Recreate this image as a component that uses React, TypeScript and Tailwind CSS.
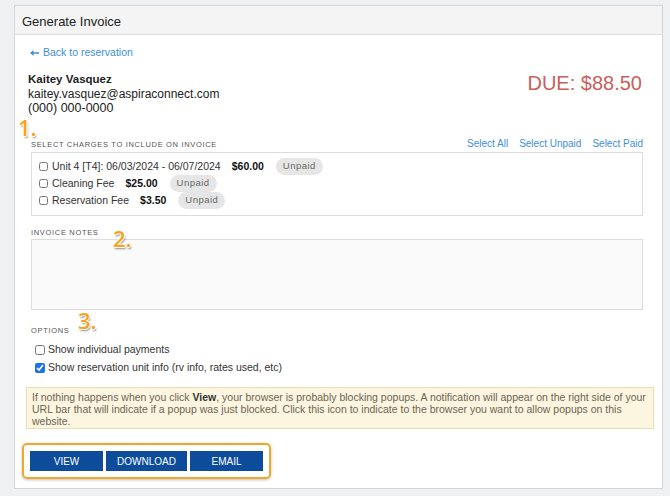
import { useState } from "react";

type Charge = {
  id: string;
  label: string;
  amount: string;
};

const charges: Charge[] = [
  { id: "unit", label: "Unit 4 [T4]: 06/03/2024 - 06/07/2024", amount: "$60.00" },
  { id: "cleaning", label: "Cleaning Fee", amount: "$25.00" },
  { id: "reservation", label: "Reservation Fee", amount: "$3.50" },
];

const Marker = ({ n, className }: { n: string; className: string }) => (
  <span
    className={`absolute font-['Open_Sans',sans-serif] text-[22px] font-semibold leading-none text-[#f3a51f] ${className}`}
    style={{
      textShadow:
        "1px 0 0 #fff, -1px 0 0 #fff, 0 1px 0 #fff, 0 -1px 0 #fff, 1px 2px 2px rgba(0,0,0,0.45)",
    }}
  >
    {n}
  </span>
);

const App = () => {
  const [selected, setSelected] = useState<string[]>([]);
  const [showPayments, setShowPayments] = useState(false);
  const [showUnitInfo, setShowUnitInfo] = useState(true);

  const toggle = (id: string) =>
    setSelected((s) => (s.includes(id) ? s.filter((x) => x !== id) : [...s, id]));

  return (
    <div className="min-h-[496px] w-[670px] bg-[#eef0f2] pt-[5px] pl-[14px] font-['Liberation_Sans',Arial,sans-serif] text-[#222]">
      <div className="relative w-[649px] border border-[#d6d6d6] bg-white">
        <div className="h-[29px] border-b border-[#dedede] bg-[#f4f4f4] pl-[7px] pt-[6px] text-[13px] text-[#222]">
          Generate Invoice
        </div>

        <div className="pl-[13px] pr-[19px] pt-[4px] pb-[9px]">
          <a href="#" className="ml-[2px] inline-flex items-center gap-[4px] text-[10.5px] text-[#3d8fd6]">
            <svg width="9" height="6" viewBox="0 0 9 6" className="block">
              <path d="M0 3 L3.5 0 L3.5 2.2 L9 2.2 L9 3.8 L3.5 3.8 L3.5 6 Z" fill="#3d8fd6" />
            </svg>
            Back to reservation
          </a>

          <div className="mt-[9px] flex justify-between">
            <div className="text-[12px] leading-[14.5px] text-[#222]">
              <div className="text-[11.5px] font-bold">Kaitey Vasquez</div>
              <div>kaitey.vasquez@aspiraconnect.com</div>
              <div className="text-[12.5px]">(000) 000-0000</div>
            </div>
            <div className="pt-[1px] pr-[1px] text-[20px] leading-none text-[#c9605a]">DUE: $88.50</div>
          </div>

          <div className="mt-[20px] pl-[3px]">
            <div className="flex items-end justify-between">
              <div className="text-[7.5px] uppercase tracking-[0.09em] text-[#555]">
                Select charges to include on invoice
              </div>
              <div className="flex gap-[11px] text-[10px] text-[#3d8fd6]">
                <span>Select All</span>
                <span>Select Unpaid</span>
                <span>Select Paid</span>
              </div>
            </div>

            <div className="mt-[1px] flex flex-col gap-[3px] border border-[#dcdcdc] px-[7px] pt-[7px] pb-[7px]">
              {charges.map((c) => (
                <label key={c.id} className="flex h-[14px] items-center text-[10.5px] text-[#333]">
                  <input
                    type="checkbox"
                    checked={selected.includes(c.id)}
                    onChange={() => toggle(c.id)}
                    className="mr-[4px] h-[9px] w-[9px]"
                  />
                  <span>{c.label}</span>
                  <span className="ml-[11px] font-bold text-[#111]">{c.amount}</span>
                  <span className="ml-[12px] rounded-full bg-[#e6e6e6] px-[7px] py-[1px] text-[9.5px] font-normal tracking-[0.05em] text-[#666]">
                    Unpaid
                  </span>
                </label>
              ))}
            </div>

            <div className="mt-[11px] text-[7.5px] uppercase tracking-[0.09em] text-[#555]">
              Invoice notes
            </div>
            <textarea className="mt-[1px] block h-[71px] w-full resize-none border border-[#dcdcdc] bg-[#fafafa]" />

            <div className="mt-[15px] text-[7.5px] uppercase tracking-[0.09em] text-[#555]">Options</div>
            <div className="mt-[7px] flex flex-col gap-[4px] pl-[4px] text-[10.5px] text-[#333]">
              <label className="flex h-[14px] items-center">
                <input
                  type="checkbox"
                  checked={showPayments}
                  onChange={() => setShowPayments(!showPayments)}
                  className="mr-[3px] h-[10px] w-[10px]"
                />
                Show individual payments
              </label>
              <label className="flex h-[14px] items-center">
                <input
                  type="checkbox"
                  checked={showUnitInfo}
                  onChange={() => setShowUnitInfo(!showUnitInfo)}
                  className="mr-[3px] h-[10px] w-[10px] accent-[#1a73e8]"
                />
                Show reservation unit info (rv info, rates used, etc)
              </label>
            </div>
          </div>

          <div className="mt-[12px] -ml-[2px] -mr-[11px] border border-[#efdcae] bg-[#fcf6e1] px-[5px] pt-[3px] pb-[1px] text-[10.5px] leading-[12px] text-[#6e6450]">
            If nothing happens when you click <b className="text-[#333]">View</b>, your browser is
            probably blocking popups. A notification will appear on the right side of your URL bar that will
            indicate if a popup was just blocked. Click this icon to indicate to the browser you want to allow
            popups on this website.
          </div>

          <div className="mt-[14px] -ml-[6px] inline-flex gap-[3px] rounded-[5px] border-2 border-[#f0a72a] px-[6px] py-[6px] shadow-[0_1px_3px_rgba(0,0,0,0.25)]">
            <button className="h-[20px] w-[73px] bg-[#0d4c9b] text-[10px] text-white">VIEW</button>
            <button className="h-[20px] w-[81px] bg-[#0d4c9b] text-[10px] text-white">DOWNLOAD</button>
            <button className="h-[20px] w-[73px] bg-[#0d4c9b] text-[10px] text-white">EMAIL</button>
          </div>
        </div>

        <Marker n="1." className="left-[3px] top-[110px]" />
        <Marker n="2." className="left-[98px] top-[221px]" />
        <Marker n="3." className="left-[63px] top-[303px]" />
      </div>
    </div>
  );
};

export default App;
